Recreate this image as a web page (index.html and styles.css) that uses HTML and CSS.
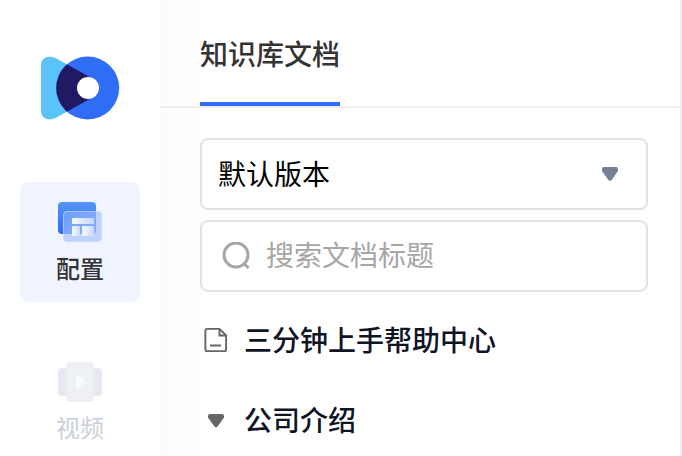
FILE: index.html
```html
<!DOCTYPE html>
<html lang="zh-CN">
    <head>
        <meta charset="UTF-8">
        <meta name="viewport" content="width=device-width, initial-scale=1.0">
        <title>知识库文档</title>
        <link rel="stylesheet" href="styles.css">
    </head>
    <body>
        <div class="container">
            <div class="sidebar">
                <svg class="logo" width="80" height="64" viewBox="0 0 80 64">
                    <defs>
                        <clipPath id="ring">
                            <circle cx="47.7" cy="32" r="31.5"/>
                        </clipPath>
                    </defs>
                    <path d="M1 9C1 1 9-1.500 17 2.700L51 21.800V42.200L17 61.300C9 65.500 1 63 1 55Z" fill="#5ac3fa"/>
                    <circle cx="47.7" cy="32" r="31.500" fill="#2f6df6"/>
                    <path d="M1 9C1 1 9-1.500 17 2.700L51 21.800V42.200L17 61.300C9 65.500 1 63 1 55Z" fill="#1f1a63" clip-path="url(#ring)"/>
                    <circle cx="48" cy="32" r="11" fill="#fff"/>
                </svg>
                <div class="menu active">
                    <svg width="48" height="44" viewBox="0 0 48 44">
                        <defs>
                            <linearGradient id="back" x1="0" y1="0" x2="0" y2="1">
                                <stop offset="0" stop-color="#5795f8"/>
                                <stop offset="1" stop-color="#2c6bf6"/>
                            </linearGradient>
                            <linearGradient id="glass" x1="0" y1="0" x2="1" y2="1">
                                <stop offset="0" stop-color="#6b9ef9"/>
                                <stop offset="1" stop-color="#8fb0fa"/>
                            </linearGradient>
                            <linearGradient id="tile" x1="0" y1="0" x2="1" y2="0">
                                <stop offset="0" stop-color="#f6f9ff"/>
                                <stop offset="1" stop-color="#c9d9fc"/>
                            </linearGradient>
                        </defs>
                        <rect x="2" y="2" width="38" height="32" rx="4" fill="url(#back)"/>
                        <rect x="7.500" y="11.500" width="38" height="30" rx="3.500" fill="#bfd1fc"/>
                        <path d="M11 11.500H40V30Q40 34 36 34H7.500V15Q7.500 11.500 11 11.500Z" fill="url(#glass)"/>
                        <rect x="7.500" y="11.500" width="38" height="30" rx="3.500" fill="none" stroke="#c3d6fd" stroke-opacity=".6"/>
                        <rect x="16" y="18" width="22" height="6" rx="1" fill="url(#tile)"/>
                        <rect x="16" y="26" width="8" height="10" rx="1" fill="url(#tile)"/>
                        <rect x="26" y="26" width="12" height="10" rx="1" fill="url(#tile)"/>
                    </svg>
                    <span>配置</span>
                </div>
                <div class="menu">
                    <svg width="48" height="44" viewBox="0 0 48 44">
                        <defs>
                            <linearGradient id="play" x1="0" y1="0" x2="1" y2="0">
                                <stop offset="0" stop-color="#fcfdfe"/>
                                <stop offset="1" stop-color="#f3f5f8"/>
                            </linearGradient>
                        </defs>
                        <rect x="2" y="8" width="44" height="28" rx="4" fill="#e5e8ee"/>
                        <rect x="10" y="2" width="28" height="40" rx="4" fill="#eef0f5"/>
                        <path d="M20 16.500Q20 15 21.500 15.800L31 21.200Q32 22 31 22.800L21.500 28.200Q20 29 20 27.500Z" fill="url(#play)"/>
                    </svg>
                    <span>视频</span>
                </div>
            </div>
            <div class="main">
                <div class="tabs">
                    <div class="tab">知识库文档</div>
                </div>
                <div class="content">
                    <div class="box select">
                        <span>默认版本</span>
                        <svg width="16" height="14" viewBox="0 0 16 14">
                            <path d="M2 0H14Q16 0 16 2V4L10 12.600Q8 15 6 12.600L0 4V2Q0 0 2 0Z" fill="#748094"/>
                        </svg>
                    </div>
                    <div class="box search">
                        <svg width="28" height="28" viewBox="0 0 28 28" fill="none" stroke="#a6a6a6" stroke-width="3">
                            <circle cx="14" cy="13" r="12"/>
                            <path d="M21.500 21L26.500 26"/>
                        </svg>
                        <span>搜索文档标题</span>
                    </div>
                    <div class="item">
                        <svg width="24" height="26" viewBox="0 0 24 26" fill="none" stroke="#666" stroke-width="1.900">
                            <path d="M3 1.900H15.500L22.100 8.500V22.500Q22.100 24.100 20.500 24.100H3Q1.400 24.100 1.400 22.500V3.500Q1.400 1.900 3 1.900Z"/>
                            <path d="M15.500 2V8.500H22M6 18.500H17"/>
                        </svg>
                        <span>三分钟上手帮助中心</span>
                    </div>
                    <div class="item">
                        <svg width="24" height="26" viewBox="0 0 24 26">
                            <path d="M6 7H18Q20 7 20 9V10.500L14 19Q12 21.500 10 19L4 10.500V9Q4 7 6 7Z" fill="#666"/>
                        </svg>
                        <span>公司介绍</span>
                    </div>
                </div>
            </div>
        </div>
    </body>
</html>
```

FILE: styles.css
```css
*{
    margin: 0;
    padding: 0;
    box-sizing: border-box;
}
body{
    font-family: "Noto Sans CJK SC", sans-serif;
    background-color: #fff;
    overflow: hidden;
}
svg{
    display: block;
    flex-shrink: 0;
}
.container{
    display: flex;
    width: 682px;
    height: 456px;
}
.sidebar{
    display: flex;
    width: 160px;
    flex-direction: column;
    align-items: center;
    padding-top: 56px;
}
.logo{
    margin-bottom: 62px;
}
.menu{
    display: flex;
    width: 120px;
    height: 120px;
    flex-shrink: 0;
    flex-direction: column;
    align-items: center;
    padding-top: 18px;
    margin-bottom: 40px;
    border-radius: 8px;
    font-size: 24px;
    line-height: 36px;
    color: #c9d0da;
}
.menu span{
    margin-top: 5px;
}
.active{
    background-color: #eff4ff;
    font-weight: 500;
    color: #333;
}
.active span{
    margin-top: 6px;
}
.main{
    width: 522px;
    border-right: 2px solid #ededf4;
    background: linear-gradient(to right, #fcfcfc, #fff 50px);
}
.tabs{
    display: flex;
    height: 108px;
    padding-left: 40px;
    border-bottom: 2px solid #ededf4;
}
.tab{
    height: 106px;
    padding-top: 33px;
    border-bottom: 4px solid #2f6df6;
    font-size: 28px;
    line-height: 40px;
    font-weight: 500;
    color: #333;
}
.content{
    padding: 30px 32px 0 40px;
}
.box{
    display: flex;
    height: 72px;
    align-items: center;
    margin-bottom: 10px;
    border: 2px solid #e3e3e3;
    border-radius: 8px;
    background-color: #fff;
    font-size: 28px;
    line-height: 40px;
}
.box span{
    padding-bottom: 2px;
}
.select{
    justify-content: space-between;
    padding: 0 28px 0 16px;
    color: #000;
}
.search{
    gap: 16px;
    padding-left: 20px;
    color: #a6a6a6;
}
.search span{
    padding-bottom: 4px;
}
.item{
    display: flex;
    height: 80px;
    align-items: center;
    gap: 16px;
    padding: 0 0 4px 4px;
    font-size: 28px;
    line-height: 40px;
    font-weight: 500;
    color: #101525;
}
.item span{
    padding-bottom: 2px;
}
```
